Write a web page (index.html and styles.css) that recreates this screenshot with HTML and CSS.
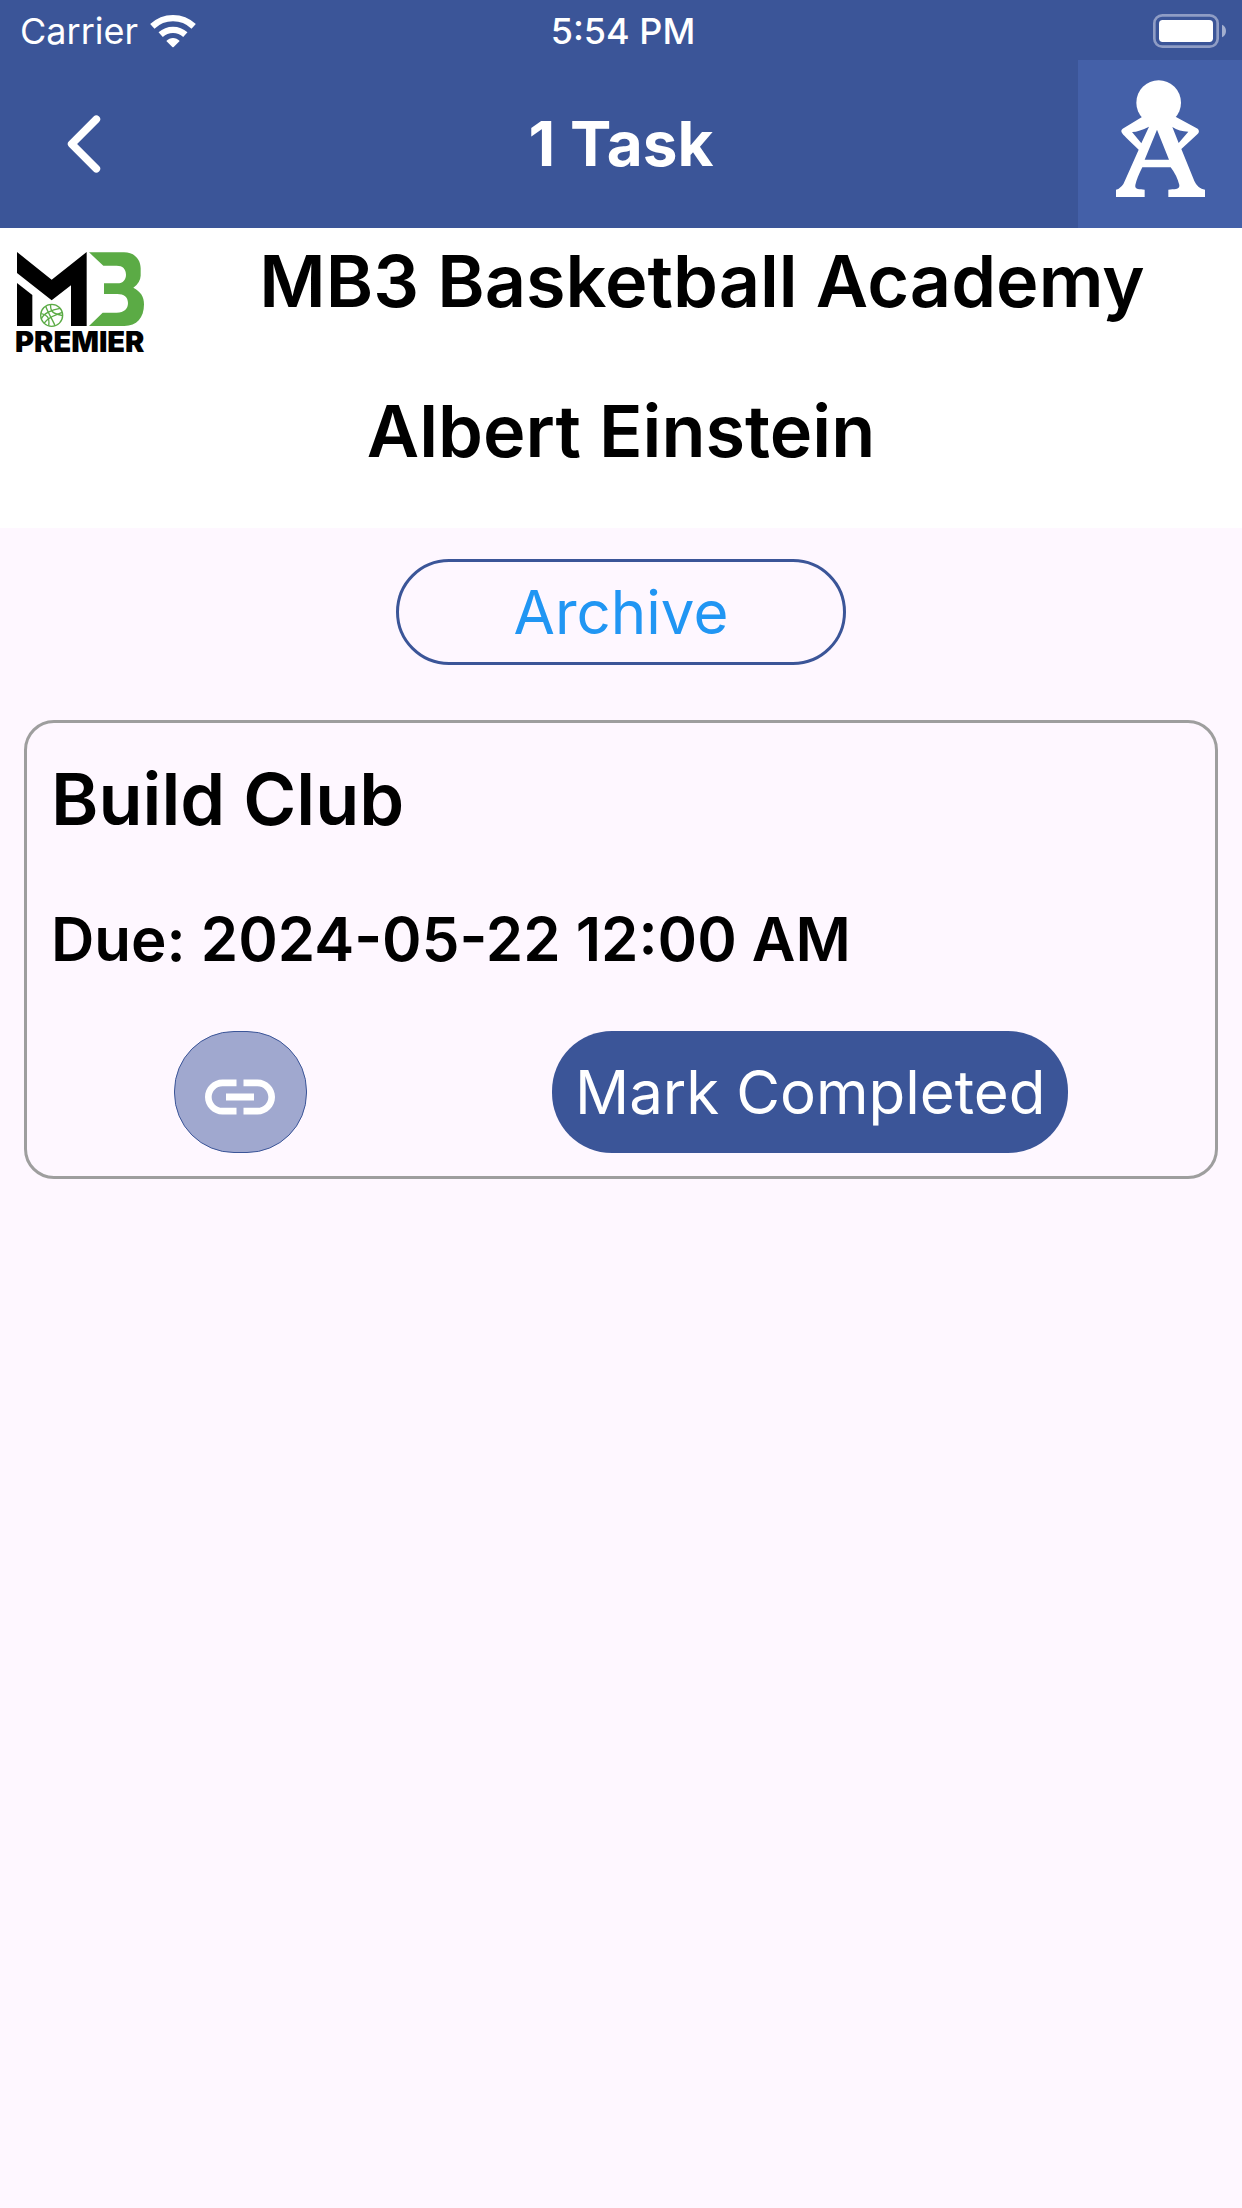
FILE: index.html
```html
<!DOCTYPE html>
<html lang="en">
<head>
    <meta charset="UTF-8">
    <meta name="viewport" content="width=device-width, initial-scale=1.0">
    <title>1 Task</title>
    <link rel="stylesheet" href="styles.css">
</head>
<body>
    <div class="status-bar">
        <div class="carrier">
            <span>Carrier</span>
            <svg width="46" height="34" viewBox="0 0 138 102" fill="none" stroke="#ffffff">
                <path d="M7 37 C42 4 96 4 131 37" stroke-width="19"/>
                <path d="M32 62 C53 43 85 43 106 62" stroke-width="19"/>
                <path d="M49 81 C60 69 78 69 89 81 L71 99 Q69 101 67 99 Z" fill="#ffffff" stroke="none"/>
            </svg>
        </div>
        <div class="time">5:54 PM</div>
        <div class="battery">
            <svg width="73" height="34" viewBox="0 0 219 102">
                <rect x="4" y="4" width="190" height="94" rx="24" fill="none" stroke="#8f9dc5" stroke-width="8"/>
                <rect x="18" y="18" width="162" height="66" rx="11" fill="#ffffff"/>
                <path d="M207 32 C223 38 223 64 207 70 Z" fill="#a3afcf"/>
            </svg>
        </div>
    </div>

    <header class="nav-bar">
        <button class="back" aria-label="Back">
            <svg width="34" height="58" viewBox="0 0 102 174" fill="none" stroke="#ffffff" stroke-width="23" stroke-linecap="round" stroke-linejoin="round">
                <path d="M88 13 L14 87 L88 161"/>
            </svg>
        </button>
        <h1>1 Task</h1>
        <button class="account" aria-label="Account">
            <svg width="90" height="118" viewBox="165 241 270 354">
                <circle cx="296" cy="309" r="67" fill="#ffffff"/>
                <path fill="#ffffff" fill-rule="evenodd" d="M246 352 L188 387 Q181 392 186 400 Q188 405 236 450 L196 540 Q187 565 168 570 V592 H254 V570 C240 568 223 571 226 556 Q231 534 247 503 H332 Q350 526 358 556 C360 571 341 568 325 570 V592 H435 V570 Q413 567 403 544 L364 448 L412 404 Q421 395 413 387 L348 352 Z M216 397 Q238 396 267 381 L244 431 Z M337 382 Q358 396 385 396 L356 430 Z M291 390 L327 480 H254 Z"/>
            </svg>
        </button>
    </header>

    <section class="profile">
        <div class="club">
            <svg class="logo" width="128" height="102" viewBox="48 62 384 306">
                <path d="M51 65 L155 148 L260 65 V287 H213 V165 L155 210 L51 128 Z"/>
                <path d="M51 158 L97 194 V287 H51 Z"/>
                <path fill="#5bab45" d="M267 66 H372 C402 66 422 86 422 114 V136 Q421 157 400 172 C422 184 432 198 432 222 C432 263 410 287 373 287 H267 L308 247 H350 C373 247 384 235 384 218 C384 200 372 191 352 191 H312 V159 H352 C370 159 378 147 378 133 C378 116 368 106 350 106 H310 Z"/>
                <g fill="none" stroke="#5bab45" stroke-width="4">
                    <circle cx="155" cy="255" r="33"/>
                    <path d="M137 228 C145 250 158 268 165 286"/>
                    <path d="M152 222 C150 245 160 250 188 256"/>
                    <path d="M180 234 C155 238 130 250 124 266"/>
                    <path d="M124 250 C140 252 150 262 146 286"/>
                    <path d="M186 246 C165 256 145 258 132 279"/>
                </g>
                <text class="logo-text" x="45" y="364">PREMIER</text>
            </svg>
            <h2>MB3 Basketball Academy</h2>
        </div>
        <h2 class="member">Albert Einstein</h2>
    </section>

    <main class="tasks">
        <button class="archive">Archive</button>

        <article class="task">
            <h3>Build Club</h3>
            <p class="due">Due: 2024-05-22 12:00 AM</p>
            <div class="actions">
                <a class="link" href="#" aria-label="Open link">
                    <svg width="84" height="84" viewBox="0 0 24 24" fill="#ffffff">
                        <path d="M3.9 12c0-1.71 1.39-3.1 3.1-3.1h4V7H7c-2.76 0-5 2.24-5 5s2.24 5 5 5h4v-1.900H7c-1.710 0-3.100-1.390-3.100-3.100zM8 13h8v-2H8v2zm9-6h-4v1.900h4c1.710 0 3.100 1.390 3.100 3.100s-1.390 3.100-3.100 3.100h-4V17h4c2.760 0 5-2.240 5-5s-2.240-5-5-5z"/>
                    </svg>
                </a>
                <button class="complete">Mark Completed</button>
            </div>
        </article>
    </main>
</body>
</html>
```

FILE: styles.css
```css
body {
    font-family: 'Inter', 'Liberation Sans', sans-serif;
    background-color: #fef7ff;
    color: #000000;
    margin: 0;
}

h1, h2, h3, p {
    margin: 0;
}

button {
    font-family: inherit;
    border: none;
    cursor: pointer;
}

.status-bar {
    display: grid;
    grid-template-columns: 1fr auto 1fr;
    align-items: center;
    box-sizing: border-box;
    height: 60px;
    padding: 2px 16px 0 20px;
    background-color: #3b5598;
    color: #ffffff;
    font-size: 36px;
}

.carrier {
    display: flex;
    align-items: center;
    gap: 12px;
}

.time {
    font-weight: 500;
}

.battery {
    display: flex;
    justify-content: flex-end;
}

.nav-bar {
    display: grid;
    grid-template-columns: 164px 1fr 164px;
    align-items: center;
    height: 168px;
    background-color: #3b5598;
    color: #ffffff;
}

.nav-bar h1 {
    font-size: 62px;
    font-weight: 700;
    line-height: 82px;
    text-align: center;
}

.nav-bar button {
    display: flex;
    align-items: center;
    justify-content: center;
    height: 100%;
    padding: 0;
    background-color: transparent;
}

.nav-bar .back {
    padding-left: 3px;
}

.nav-bar .account {
    padding-bottom: 10px;
    background-color: #4460a8;
}

.profile {
    padding: 12px 0 56px;
    background-color: #ffffff;
}

.profile h2, .task h3 {
    font-size: 72px;
    font-weight: 600;
    line-height: 82px;
}

.club {
    display: flex;
    align-items: flex-start;
}

.club h2 {
    flex: 1;
    text-align: center;
}

.logo {
    margin: 11px 18px 0 16px;
    overflow: visible;
}

.logo-text {
    font-size: 87px;
    font-weight: 900;
}

.profile .member {
    margin-top: 37px;
    text-align: center;
}

.tasks {
    padding: 31px 24px;
}

.archive {
    display: block;
    width: 450px;
    margin: 0 auto 55px;
    padding: 14px 0;
    border: 3px solid #3b5598;
    border-radius: 54px;
    background-color: transparent;
    color: #2196f3;
    font-size: 60px;
    line-height: 72px;
}

.task {
    padding: 35px 24px 23px;
    border: 3px solid #9e9e9e;
    border-radius: 30px;
}

.due {
    margin-top: 63px;
    font-size: 60px;
    font-weight: 600;
    line-height: 72px;
}

.actions {
    display: flex;
    justify-content: space-around;
    margin-top: 56px;
}

.link {
    display: flex;
    align-items: center;
    justify-content: center;
    box-sizing: border-box;
    width: 133px;
    padding-top: 10px;
    border: 1px solid #3b5598;
    border-radius: 60px;
    background-color: #a0a8cf;
}

.complete {
    width: 516px;
    padding: 25px 0;
    border-radius: 60px;
    background-color: #3b5598;
    color: #ffffff;
    font-size: 60px;
    line-height: 72px;
}
```
